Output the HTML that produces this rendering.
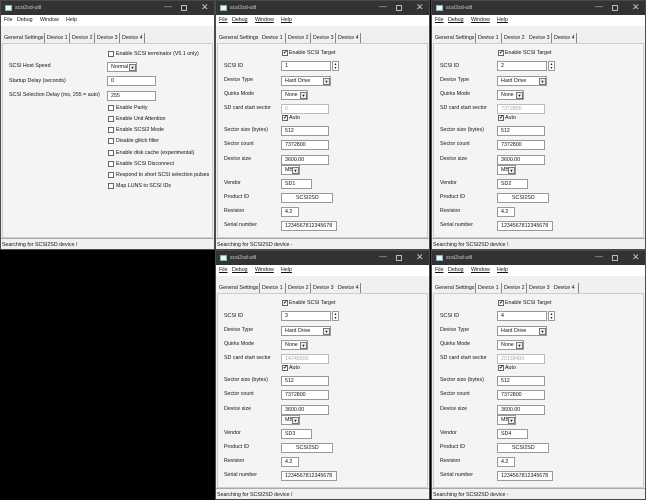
<!DOCTYPE html>
<html><head><style>
*{margin:0;padding:0;box-sizing:border-box}
body{width:646px;height:500px;background:#000;position:relative;overflow:hidden;font-family:"Liberation Sans",sans-serif;font-size:5.3px;color:#111}
.w{position:absolute;width:215px;height:250px;background:#f0f0f0;border:1px solid #4a4a4a;overflow:hidden}
.w div,.w span{position:absolute;white-space:nowrap}
.w .tb{left:0;top:0;width:100%;height:14px;background:#333 !important;color:#ddd}
.tb .ic{left:4px;top:4px;width:7px;height:6px;background:#dfe;border:1px solid #9ab}
.tb .t{left:14px;top:4px;color:#ccc}
.tb .b1{left:163px;top:1px;font-size:8px;color:#bbb}
.tb .b2{left:180px;top:4px;width:6px;height:6px;border:1px solid #bbb}
.tb .b3{left:200px;top:1px;font-size:9px;color:#ccc}
.mn{left:0;top:14px;width:100%;height:11px;background:#fff}
.mn span{top:2px}
.u{text-decoration:underline}
.tabs{left:0;top:31px;height:12px;width:100%}
.tabs span{top:3px}
.sep{top:1px;width:1px;height:10px;background:#888}
.pn{left:1px;top:42px;width:211px;height:195px;border:1px solid #ccc;background:#f4f4f4}
.l{left:8px}
.in{height:10px;background:#fff;border:1px solid #999;padding:1px 0 0 3px;line-height:7px}
.dis{color:#aaa;border-color:#bbb}
.cb{width:6px;height:6px;border:1px solid #666;background:#fff}
.ck{font-size:6px;line-height:5px;text-align:center;font-weight:bold}
.dd{width:7px;height:7px;top:1px;border:1px solid #777;background:#eee;font-size:4px;text-align:center;line-height:6px}
.sb{left:0;top:237px;width:100%;height:13px;border-top:1px solid #aaa;background:#f0f0f0}
.sb span{left:1px;top:3px}
</style></head><body>

<div class="w" style="left:0;top:0">
<div class="tb"><div class="ic"></div><span class="t">scsi2sd-util</span><span class="b1">—</span><div class="b2"></div><span class="b3">✕</span></div>
<div class="mn"><span style="left:3px">File</span><span style="left:16px">Debug</span><span style="left:39px">Window</span><span style="left:65px">Help</span></div>
<div class="tabs"><span style="left:3px">General Settings</span><div class="sep" style="left:43px"></div><span style="left:46px">Device 1</span><div class="sep" style="left:68px"></div><span style="left:71px">Device 2</span><div class="sep" style="left:93px"></div><span style="left:96px">Device 3</span><div class="sep" style="left:118px"></div><span style="left:121px">Device 4</span><div class="sep" style="left:143px"></div></div>
<div class="pn"></div>
<div class="cb" style="left:107px;top:50px"></div><span style="left:115px;top:50px">Enable SCSI terminator (V5.1 only)</span>
<span class="l" style="top:62px">SCSI Host Speed</span>
<div class="in" style="left:106px;top:61px;width:30px">Normal<div class="dd" style="left:21px">▼</div></div>
<span class="l" style="top:77px">Startup Delay (seconds)</span>
<div class="in" style="left:106px;top:75px;width:49px">0</div>
<span class="l" style="top:91px">SCSI Selection Delay (ms, 255 = auto)</span>
<div class="in" style="left:106px;top:90px;width:49px">255</div>
<div class="cb" style="left:107px;top:104px"></div><span style="left:115px;top:104px">Enable Parity</span>
<div class="cb" style="left:107px;top:115px"></div><span style="left:115px;top:115px">Enable Unit Attention</span>
<div class="cb" style="left:107px;top:126px"></div><span style="left:115px;top:126px">Enable SCSI2 Mode</span>
<div class="cb" style="left:107px;top:137px"></div><span style="left:115px;top:137px">Disable glitch filter</span>
<div class="cb" style="left:107px;top:149px"></div><span style="left:115px;top:149px">Enable disk cache (experimental)</span>
<div class="cb" style="left:107px;top:160px"></div><span style="left:115px;top:160px">Enable SCSI Disconnect</span>
<div class="cb" style="left:107px;top:171px"></div><span style="left:115px;top:171px">Respond to short SCSI selection pulses</span>
<div class="cb" style="left:107px;top:182px"></div><span style="left:115px;top:182px">Map LUNS to SCSI IDs</span>
<div class="sb"><span>Searching for SCSI2SD device /</span></div>
</div>

<div class="w" style="left:215px;top:0">
<div class="tb"><div class="ic"></div><span class="t">scsi2sd-util</span><span class="b1">—</span><div class="b2"></div><span class="b3">✕</span></div>
<div class="mn"><span class="u" style="left:3px">File</span><span class="u" style="left:16px">Debug</span><span class="u" style="left:39px">Window</span><span class="u" style="left:65px">Help</span></div>
<div class="tabs"><span style="left:3px">General Settings</span><span style="left:46px">Device 1</span><div class="sep" style="left:69px"></div><span style="left:72px">Device 2</span><div class="sep" style="left:94px"></div><span style="left:97px">Device 3</span><div class="sep" style="left:119px"></div><span style="left:122px">Device 4</span><div class="sep" style="left:144px"></div></div>
<div class="pn"></div>
<div class="cb ck" style="left:66px;top:49px">✓</div><span style="left:73px;top:49px">Enable SCSI Target</span>
<span class="l" style="top:62px">SCSI ID</span><div class="in" style="left:65px;top:60px;width:50px">1</div><div class="in" style="left:116px;top:60px;width:7px;padding:0;font-size:4px;line-height:4px;text-align:center">▴<br>▾</div>
<span class="l" style="top:76px">Device Type</span><div class="in" style="left:65px;top:75px;width:50px">Hard Drive<div class="dd" style="left:41px">▼</div></div>
<span class="l" style="top:90px">Quirks Mode</span><div class="in" style="left:65px;top:89px;width:27px">None<div class="dd" style="left:18px">▼</div></div>
<span class="l" style="top:104px">SD card start sector</span><div class="in dis" style="left:65px;top:103px;width:48px">0</div>
<div class="cb ck" style="left:66px;top:114px">✓</div><span style="left:73px;top:114px">Auto</span>
<span class="l" style="top:126px">Sector size (bytes)</span><div class="in" style="left:65px;top:125px;width:48px">512</div>
<span class="l" style="top:140px">Sector count</span><div class="in" style="left:65px;top:139px;width:48px">7372800</div>
<span class="l" style="top:155px">Device size</span><div class="in" style="left:65px;top:154px;width:48px">3600.00</div>
<div class="in" style="left:65px;top:164px;width:19px">MB<div class="dd" style="left:10px">▼</div></div>
<span class="l" style="top:179px">Vendor</span><div class="in" style="left:65px;top:178px;width:31px">SD1</div>
<span class="l" style="top:193px">Product ID</span><div class="in" style="left:65px;top:192px;width:52px;padding-left:14px">SCSI2SD</div>
<span class="l" style="top:207px">Revision</span><div class="in" style="left:65px;top:206px;width:18px">4.2</div>
<span class="l" style="top:221px">Serial number</span><div class="in" style="left:65px;top:220px;width:56px">1234567812345678</div>
<div class="sb"><span>Searching for SCSI2SD device -</span></div>
</div>

<div class="w" style="left:431px;top:0">
<div class="tb"><div class="ic"></div><span class="t">scsi2sd-util</span><span class="b1">—</span><div class="b2"></div><span class="b3">✕</span></div>
<div class="mn"><span class="u" style="left:3px">File</span><span class="u" style="left:16px">Debug</span><span class="u" style="left:39px">Window</span><span class="u" style="left:65px">Help</span></div>
<div class="tabs"><span style="left:3px">General Settings</span><div class="sep" style="left:43px"></div><span style="left:46px">Device 1</span><div class="sep" style="left:69px"></div><span style="left:72px">Device 2</span><span style="left:97px">Device 3</span><div class="sep" style="left:119px"></div><span style="left:122px">Device 4</span><div class="sep" style="left:144px"></div></div>
<div class="pn"></div>
<div class="cb ck" style="left:66px;top:49px">✓</div><span style="left:73px;top:49px">Enable SCSI Target</span>
<span class="l" style="top:62px">SCSI ID</span><div class="in" style="left:65px;top:60px;width:50px">2</div><div class="in" style="left:116px;top:60px;width:7px;padding:0;font-size:4px;line-height:4px;text-align:center">▴<br>▾</div>
<span class="l" style="top:76px">Device Type</span><div class="in" style="left:65px;top:75px;width:50px">Hard Drive<div class="dd" style="left:41px">▼</div></div>
<span class="l" style="top:90px">Quirks Mode</span><div class="in" style="left:65px;top:89px;width:27px">None<div class="dd" style="left:18px">▼</div></div>
<span class="l" style="top:104px">SD card start sector</span><div class="in dis" style="left:65px;top:103px;width:48px">7372800</div>
<div class="cb ck" style="left:66px;top:114px">✓</div><span style="left:73px;top:114px">Auto</span>
<span class="l" style="top:126px">Sector size (bytes)</span><div class="in" style="left:65px;top:125px;width:48px">512</div>
<span class="l" style="top:140px">Sector count</span><div class="in" style="left:65px;top:139px;width:48px">7372800</div>
<span class="l" style="top:155px">Device size</span><div class="in" style="left:65px;top:154px;width:48px">3600.00</div>
<div class="in" style="left:65px;top:164px;width:19px">MB<div class="dd" style="left:10px">▼</div></div>
<span class="l" style="top:179px">Vendor</span><div class="in" style="left:65px;top:178px;width:31px">SD2</div>
<span class="l" style="top:193px">Product ID</span><div class="in" style="left:65px;top:192px;width:52px;padding-left:14px">SCSI2SD</div>
<span class="l" style="top:207px">Revision</span><div class="in" style="left:65px;top:206px;width:18px">4.2</div>
<span class="l" style="top:221px">Serial number</span><div class="in" style="left:65px;top:220px;width:56px">1234567812345678</div>
<div class="sb"><span>Searching for SCSI2SD device \</span></div>
</div>

<div class="w" style="left:215px;top:250px">
<div class="tb"><div class="ic"></div><span class="t">scsi2sd-util</span><span class="b1">—</span><div class="b2"></div><span class="b3">✕</span></div>
<div class="mn"><span class="u" style="left:3px">File</span><span class="u" style="left:16px">Debug</span><span class="u" style="left:39px">Window</span><span class="u" style="left:65px">Help</span></div>
<div class="tabs"><span style="left:3px">General Settings</span><div class="sep" style="left:43px"></div><span style="left:46px">Device 1</span><div class="sep" style="left:69px"></div><span style="left:72px">Device 2</span><div class="sep" style="left:94px"></div><span style="left:97px">Device 3</span><span style="left:122px">Device 4</span><div class="sep" style="left:144px"></div></div>
<div class="pn"></div>
<div class="cb ck" style="left:66px;top:49px">✓</div><span style="left:73px;top:49px">Enable SCSI Target</span>
<span class="l" style="top:62px">SCSI ID</span><div class="in" style="left:65px;top:60px;width:50px">3</div><div class="in" style="left:116px;top:60px;width:7px;padding:0;font-size:4px;line-height:4px;text-align:center">▴<br>▾</div>
<span class="l" style="top:76px">Device Type</span><div class="in" style="left:65px;top:75px;width:50px">Hard Drive<div class="dd" style="left:41px">▼</div></div>
<span class="l" style="top:90px">Quirks Mode</span><div class="in" style="left:65px;top:89px;width:27px">None<div class="dd" style="left:18px">▼</div></div>
<span class="l" style="top:104px">SD card start sector</span><div class="in dis" style="left:65px;top:103px;width:48px">14745600</div>
<div class="cb ck" style="left:66px;top:114px">✓</div><span style="left:73px;top:114px">Auto</span>
<span class="l" style="top:126px">Sector size (bytes)</span><div class="in" style="left:65px;top:125px;width:48px">512</div>
<span class="l" style="top:140px">Sector count</span><div class="in" style="left:65px;top:139px;width:48px">7372800</div>
<span class="l" style="top:155px">Device size</span><div class="in" style="left:65px;top:154px;width:48px">3600.00</div>
<div class="in" style="left:65px;top:164px;width:19px">MB<div class="dd" style="left:10px">▼</div></div>
<span class="l" style="top:179px">Vendor</span><div class="in" style="left:65px;top:178px;width:31px">SD3</div>
<span class="l" style="top:193px">Product ID</span><div class="in" style="left:65px;top:192px;width:52px;padding-left:14px">SCSI2SD</div>
<span class="l" style="top:207px">Revision</span><div class="in" style="left:65px;top:206px;width:18px">4.2</div>
<span class="l" style="top:221px">Serial number</span><div class="in" style="left:65px;top:220px;width:56px">1234567812345678</div>
<div class="sb"><span>Searching for SCSI2SD device /</span></div>
</div>

<div class="w" style="left:431px;top:250px">
<div class="tb"><div class="ic"></div><span class="t">scsi2sd-util</span><span class="b1">—</span><div class="b2"></div><span class="b3">✕</span></div>
<div class="mn"><span class="u" style="left:3px">File</span><span class="u" style="left:16px">Debug</span><span class="u" style="left:39px">Window</span><span class="u" style="left:65px">Help</span></div>
<div class="tabs"><span style="left:3px">General Settings</span><div class="sep" style="left:43px"></div><span style="left:46px">Device 1</span><div class="sep" style="left:69px"></div><span style="left:72px">Device 2</span><div class="sep" style="left:94px"></div><span style="left:97px">Device 3</span><span style="left:122px">Device 4</span><div class="sep" style="left:146px"></div></div>
<div class="pn"></div>
<div class="cb ck" style="left:66px;top:49px">✓</div><span style="left:73px;top:49px">Enable SCSI Target</span>
<span class="l" style="top:62px">SCSI ID</span><div class="in" style="left:65px;top:60px;width:50px">4</div><div class="in" style="left:116px;top:60px;width:7px;padding:0;font-size:4px;line-height:4px;text-align:center">▴<br>▾</div>
<span class="l" style="top:76px">Device Type</span><div class="in" style="left:65px;top:75px;width:50px">Hard Drive<div class="dd" style="left:41px">▼</div></div>
<span class="l" style="top:90px">Quirks Mode</span><div class="in" style="left:65px;top:89px;width:27px">None<div class="dd" style="left:18px">▼</div></div>
<span class="l" style="top:104px">SD card start sector</span><div class="in dis" style="left:65px;top:103px;width:48px">22118400</div>
<div class="cb ck" style="left:66px;top:114px">✓</div><span style="left:73px;top:114px">Auto</span>
<span class="l" style="top:126px">Sector size (bytes)</span><div class="in" style="left:65px;top:125px;width:48px">512</div>
<span class="l" style="top:140px">Sector count</span><div class="in" style="left:65px;top:139px;width:48px">7372800</div>
<span class="l" style="top:155px">Device size</span><div class="in" style="left:65px;top:154px;width:48px">3600.00</div>
<div class="in" style="left:65px;top:164px;width:19px">MB<div class="dd" style="left:10px">▼</div></div>
<span class="l" style="top:179px">Vendor</span><div class="in" style="left:65px;top:178px;width:31px">SD4</div>
<span class="l" style="top:193px">Product ID</span><div class="in" style="left:65px;top:192px;width:52px;padding-left:14px">SCSI2SD</div>
<span class="l" style="top:207px">Revision</span><div class="in" style="left:65px;top:206px;width:18px">4.2</div>
<span class="l" style="top:221px">Serial number</span><div class="in" style="left:65px;top:220px;width:56px">1234567812345678</div>
<div class="sb"><span>Searching for SCSI2SD device -</span></div>
</div>

</body></html>
